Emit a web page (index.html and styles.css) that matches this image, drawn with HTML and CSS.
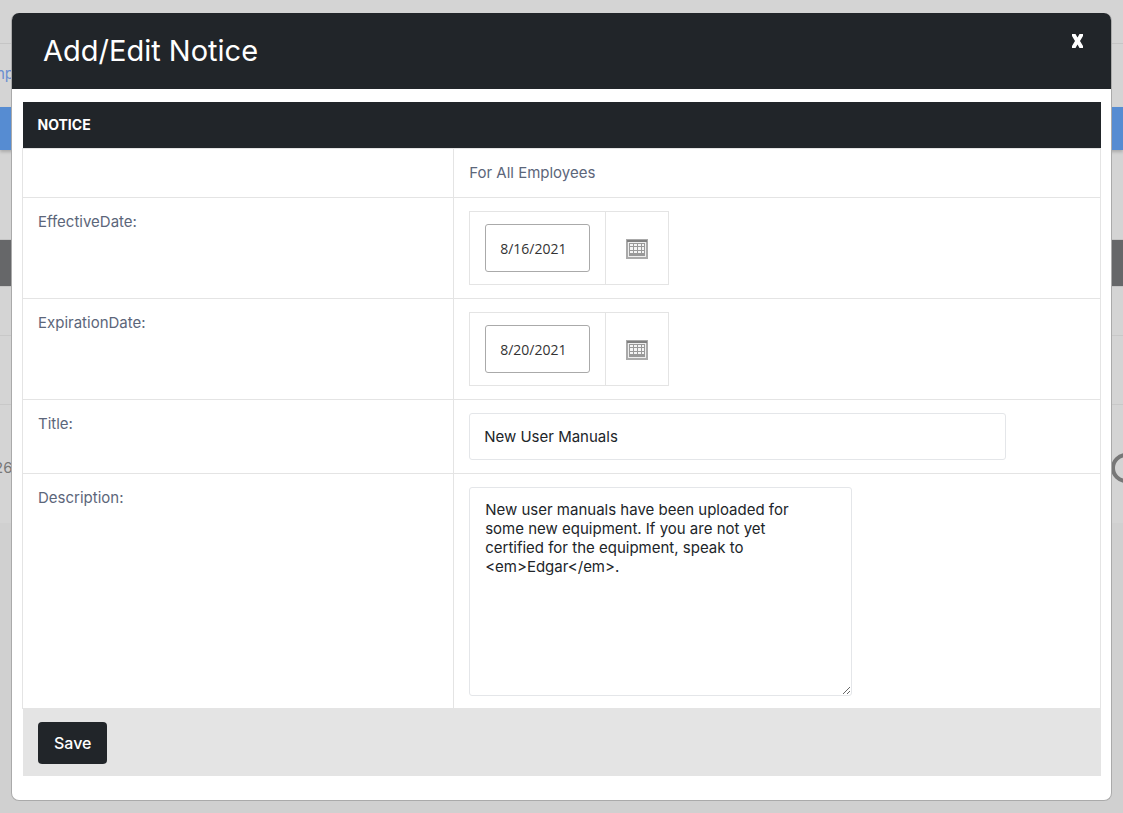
FILE: index.html
```html
<!DOCTYPE html>
<html lang="en">

<head>
    <meta charset="UTF-8">
    <meta name="viewport" content="width=device-width, initial-scale=1.0">
    <title>Add/Edit Notice</title>
    <link rel="stylesheet" href="styles.css">
</head>

<body>
    <!-- page behind the dialog -->
    <div class="page" aria-hidden="true">
        <div class="page-top"></div>
        <div class="page-crumbs"><span>Emp</span></div>
        <div class="page-nav"></div>
        <div class="page-space"></div>
        <div class="page-heading"></div>
        <div class="page-row"></div>
        <div class="page-row page-row-tall"></div>
        <div class="page-row page-row-last">
            <span>26</span>
            <svg width="30" height="30" viewBox="0 0 30 30">
                <circle cx="15" cy="15" r="13" fill="none" stroke="#777" stroke-width="4" />
            </svg>
        </div>
    </div>

    <div class="modal" role="dialog" aria-labelledby="modalTitle">
        <div class="modal-header">
            <h1 id="modalTitle">Add/Edit Notice</h1>
            <button type="button" class="close" aria-label="Close">
                <svg width="13" height="16" viewBox="0 0 13 16">
                    <path d="M1 1h3.500l2 3.500L8.500 1H12v2L9 8l3 5v2H8.500l-2-3.500-2 3.500H1v-2l3-5-3-5z" fill="#fff" />
                </svg>
            </button>
        </div>
        <form class="modal-body">
            <table class="notice-table">
                <thead>
                    <tr>
                        <th colspan="2">NOTICE</th>
                    </tr>
                </thead>
                <tbody>
                    <tr>
                        <td class="label-cell"></td>
                        <td>For All Employees</td>
                    </tr>
                    <tr>
                        <td><label for="effectiveDate">EffectiveDate:</label></td>
                        <td>
                            <div class="date-picker">
                                <div class="date-field">
                                    <input type="text" id="effectiveDate" class="date-input" value="8/16/2021">
                                </div>
                                <button type="button" class="date-button" aria-label="Pick effective date">
                                    <svg width="22" height="20" viewBox="0 0 22 20">
                                        <path d="M1 1h20v18H1z" fill="#eee" stroke="#aaa" stroke-width="2" />
                                        <path d="M1 1h20v2H1z" fill="#808080" />
                                        <path d="M3 4h16v13H3z" fill="#999" />
                                        <path d="M4 5h3v2H4zM8 5h3v2H8zM12 5h3v2h-3zM16 5h2v2h-2zM4 8h3v3H4zM8 8h3v3H8zM12 8h3v3h-3zM16 8h2v3h-2zM4 12h3v2H4zM8 12h3v2H8zM12 12h3v2h-3zM16 12h2v2h-2z" fill="#f4f4f4" />
                                    </svg>
                                </button>
                            </div>
                        </td>
                    </tr>
                    <tr>
                        <td><label for="expirationDate">ExpirationDate:</label></td>
                        <td>
                            <div class="date-picker">
                                <div class="date-field">
                                    <input type="text" id="expirationDate" class="date-input" value="8/20/2021">
                                </div>
                                <button type="button" class="date-button" aria-label="Pick expiration date">
                                    <svg width="22" height="20" viewBox="0 0 22 20">
                                        <path d="M1 1h20v18H1z" fill="#eee" stroke="#aaa" stroke-width="2" />
                                        <path d="M1 1h20v2H1z" fill="#808080" />
                                        <path d="M3 4h16v13H3z" fill="#999" />
                                        <path d="M4 5h3v2H4zM8 5h3v2H8zM12 5h3v2h-3zM16 5h2v2h-2zM4 8h3v3H4zM8 8h3v3H8zM12 8h3v3h-3zM16 8h2v3h-2zM4 12h3v2H4zM8 12h3v2H8zM12 12h3v2h-3zM16 12h2v2h-2z" fill="#f4f4f4" />
                                    </svg>
                                </button>
                            </div>
                        </td>
                    </tr>
                    <tr>
                        <td><label for="title">Title:</label></td>
                        <td><input type="text" id="title" class="text-input" value="New User Manuals"></td>
                    </tr>
                    <tr>
                        <td><label for="description">Description:</label></td>
                        <td><textarea id="description" class="text-area">New user manuals have been uploaded for some new equipment. If you are not yet certified for the equipment, speak to &lt;em&gt;Edgar&lt;/em&gt;.</textarea></td>
                    </tr>
                </tbody>
            </table>
            <div class="modal-actions">
                <button type="submit" class="save">Save</button>
            </div>
        </form>
    </div>
</body>

</html>
```
FILE: styles.css
```css
* {
    box-sizing: border-box;
}

body {
    margin: 0;
    min-height: 100vh;
    background-color: #d0d0d0;
    font-family: Inter, sans-serif;
    font-size: 15px;
    line-height: 22px;
    color: #5c667a;
    overflow: hidden;
}

/* page behind the dialog */
.page {
    background-color: #d4d4d4;
    overflow: hidden;
}

.page-top {
    height: 44px;
    border-bottom: 1px solid #c5c5c5;
}

.page-crumbs {
    display: flex;
    align-items: center;
    justify-content: flex-end;
    width: 14px;
    height: 63px;
    padding-bottom: 4px;
    color: #6a8fd0;
}

.page-nav {
    height: 43px;
    background-color: #568cd2;
    box-shadow: 0 2px 3px rgba(0, 0, 0, 0.2);
}

.page-space {
    height: 89px;
}

.page-heading {
    height: 48px;
    background-color: #666769;
    border-top: 1px solid #c5c5c5;
    border-bottom: 1px solid #c5c5c5;
}

.page-row {
    height: 49px;
    border-bottom: 1px solid #c8c8c8;
}

.page-row-tall {
    height: 69px;
}

.page-row-last {
    display: flex;
    align-items: center;
    justify-content: space-between;
    height: 118px;
    padding-top: 8px;
    margin: 0 -18px 0 -6px;
    border: 0;
    color: #777;
}

/* dialog */
.modal {
    position: absolute;
    top: 13px;
    left: 11px;
    right: 11px;
    background-color: #fff;
    border: 1px solid #aaa;
    border-top: 0;
    border-radius: 8px;
}

.modal-header {
    display: flex;
    justify-content: space-between;
    align-items: flex-start;
    padding: 18px 27px 18px 31px;
    background-color: #212529;
    border-radius: 7px 7px 0 0;
}

.modal-header h1 {
    margin: 0;
    font-size: 29px;
    font-weight: 400;
    line-height: 40px;
    color: #fff;
}

.close {
    display: flex;
    margin: 2px 0 0;
    padding: 0;
    border: 0;
    background: none;
    cursor: pointer;
}

.modal-body {
    padding: 13px 10px 24px;
}

.notice-table {
    width: 100%;
    border-collapse: collapse;
}

.notice-table th {
    padding: 12px 15px;
    background-color: #212529;
    color: #fff;
    font-size: 14px;
    font-weight: 700;
    text-align: left;
}

.notice-table td {
    padding: 13px 15px;
    border: 1px solid #e4e4e4;
    vertical-align: top;
}

.notice-table tr:last-child td {
    padding-bottom: 12px;
}

.label-cell {
    width: 40%;
}

.date-picker {
    display: inline-flex;
    border: 1px solid #e4e4e4;
    vertical-align: top;
}

.date-field {
    padding: 12px 15px;
    border-right: 1px solid #e4e4e4;
}

.date-input {
    display: block;
    width: 105px;
    height: 48px;
    padding: 0 14px;
    border: 1px solid #aaa;
    border-radius: 3px;
    font-family: "Open Sans", sans-serif;
    font-size: 14px;
    color: #333;
}

.date-button {
    display: flex;
    align-items: center;
    justify-content: center;
    width: 62px;
    padding: 2px 0 0;
    border: 0;
    background: none;
    cursor: pointer;
}

.text-input,
.text-area {
    display: block;
    max-width: 100%;
    border: 1px solid #e4e6e9;
    border-radius: 3px;
    font-family: inherit;
    font-size: 15px;
    color: #212529;
}

.text-input {
    width: 537px;
    height: 47px;
    padding: 0 14px;
}

.text-area {
    width: 383px;
    height: 209px;
    padding: 12px 32px 12px 15px;
    line-height: 19px;
}

.modal-actions {
    margin-left: 1px;
    padding: 13px 15px 12px;
    background-color: #e4e4e4;
}

.save {
    height: 42px;
    padding: 0 16px;
    border: 0;
    border-radius: 4px;
    background-color: #212529;
    color: #fff;
    font-family: inherit;
    font-size: 16px;
    font-weight: 500;
    vertical-align: top;
    cursor: pointer;
}
```
